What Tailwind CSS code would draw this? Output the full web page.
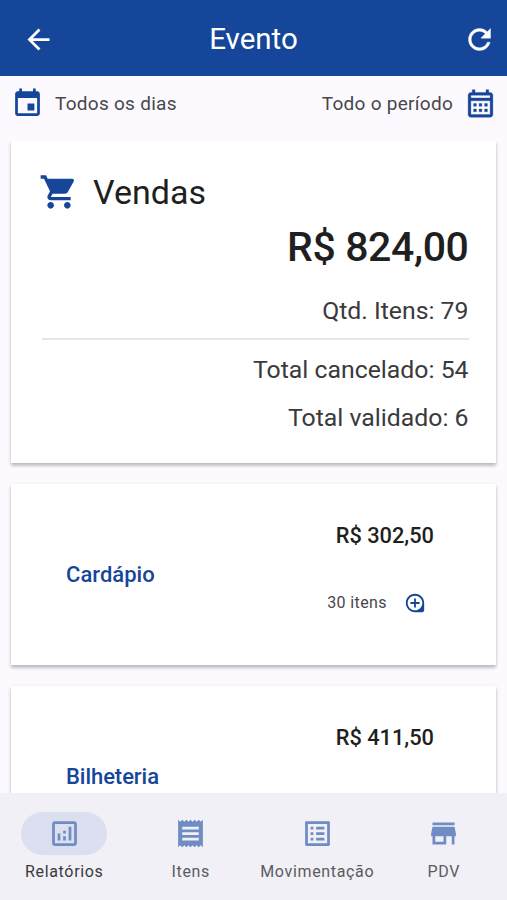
<!DOCTYPE html>
<html lang="pt-BR">
<head>
<meta charset="utf-8">
<title>Evento</title>
<script src="https://cdn.jsdelivr.net/npm/@tailwindcss/browser@4"></script>
</head>
<body class="font-[Roboto,sans-serif]">
<div class="flex h-[900px] w-[507px] flex-col overflow-hidden bg-[#fcfafe] text-[#1f1f21]">
  <header class="flex h-[76px] shrink-0 items-center justify-between bg-[#164699] pr-[11px] pl-[22px] pt-0.5 text-white">
    <svg class="size-[33px]" viewBox="0 0 24 24" fill="currentColor"><path d="M20 11H7.83l5.59-5.59L12 4l-8 8 8 8 1.41-1.41L7.83 13H20v-2z"/></svg>
    <h1 class="mr-[11px] text-[29.5px] leading-9">Evento</h1>
    <svg class="size-[33px]" viewBox="0 0 24 24" fill="currentColor" stroke="currentColor" stroke-width="0.3"><path d="M17.65 6.35C16.2 4.9 14.21 4 12 4c-4.42 0-7.99 3.58-7.99 8s3.57 8 7.99 8c3.73 0 6.84-2.55 7.73-6h-2.08c-.82 2.33-3.04 4-5.65 4-3.31 0-6-2.69-6-6s2.69-6 6-6c1.66 0 3.14.69 4.22 1.78L13 11h7V4l-2.35 2.35z"/></svg>
  </header>

  <div class="flex h-[65px] shrink-0 justify-between pr-[10px] pl-[11px] pt-[11px] text-[19px] leading-[34px] tracking-[0.28px] text-[#48474b]">
    <div class="flex h-[34px] gap-[11px]">
      <svg class="size-[33px] text-[#164699]" viewBox="0 0 24 24" fill="currentColor"><path d="M17 12h-5v5h5v-5zM16 1v2H8V1H6v2H5c-1.11 0-1.99.9-1.99 2L3 19c0 1.1.89 2 2 2h14c1.1 0 2-.9 2-2V5c0-1.1-.9-2-2-2h-1V1h-2zm3 18H5V8h14v11z"/></svg>
      <span>Todos os dias</span>
    </div>
    <div class="flex h-[34px] gap-[11px]">
      <span>Todo o período</span>
      <svg class="size-[33px] text-[#164699]" viewBox="0 0 24 24" fill="currentColor" stroke="currentColor" stroke-width="0.25"><path d="M19 4h-1V2h-2v2H8V2H6v2H5c-1.11 0-1.99.9-1.99 2L3 20c0 1.1.89 2 2 2h14c1.1 0 2-.9 2-2V6c0-1.1-.9-2-2-2zm0 16H5V10h14v10zm0-12H5V6h14v2zM9 14H7v-2h2v2zm4 0h-2v-2h2v2zm4 0h-2v-2h2v2zm-8 4H7v-2h2v2zm4 0h-2v-2h2v2zm4 0h-2v-2h2v2z"/></svg>
    </div>
  </div>

  <main class="flex min-h-0 flex-1 flex-col gap-[21px] overflow-hidden pr-[11px] pl-[11px]">
    <section class="flex h-[322px] shrink-0 flex-col bg-white pr-[27.5px] pl-[30.5px] text-right text-[24.8px] text-[#3a3a3c] shadow-[0_3px_3px_rgba(0,0,0,0.2),0_1px_4px_rgba(0,0,0,0.1)]">
      <div class="mt-[31px] -ml-[2.5px] flex h-10 items-center gap-[14px] text-[#1f1f21]">
        <svg class="size-10 text-[#164699]" viewBox="0 0 24 24" fill="currentColor"><path d="M7 18c-1.1 0-1.99.9-1.99 2S5.9 22 7 22s2-.9 2-2-.9-2-2-2zM1 2v2h2l3.6 7.59-1.35 2.45c-.16.28-.25.61-.25.96 0 1.1.9 2 2 2h12v-2H7.42c-.14 0-.25-.11-.25-.25l.03-.12.9-1.63h7.45c.75 0 1.41-.41 1.75-1.03l3.58-6.49c.08-.14.12-.31.12-.48 0-.55-.45-1-1-1H5.21l-.94-2H1zm16 16c-1.1 0-1.99.9-1.99 2s.89 2 1.99 2 2-.9 2-2-.9-2-2-2z"/></svg>
        <h2 class="text-[34px] leading-10">Vendas</h2>
      </div>
      <div class="mt-2.5 h-[50px] text-[41px] leading-[50px] font-medium tracking-[-0.4px] text-[#1f1f21]">R$ 824,00</div>
      <div class="mt-[23px] h-8 leading-8">Qtd. Itens: 79</div>
      <hr class="mt-[11px] border-t-2 border-[#e6e6e8]">
      <div class="mt-[14px] h-8 leading-8">Total cancelado: 54</div>
      <div class="mt-4 h-8 leading-8">Total validado: 6</div>
    </section>

    <section class="flex h-[181px] shrink-0 items-center justify-between bg-white pl-[55px] pr-[62px] shadow-[0_3px_3px_rgba(0,0,0,0.2),0_1px_4px_rgba(0,0,0,0.1)]">
      <h3 class="text-[22px] leading-7 font-medium tracking-[0.03px] text-[#164699]">Cardápio</h3>
      <div class="flex flex-col items-end gap-[39px] pb-[10px]">
        <div class="text-[21.8px] leading-7 font-medium">R$ 302,50</div>
        <div class="mr-[8px] flex items-center gap-[17px] text-[16px] leading-7 tracking-[0.4px] text-[#48474b]">30 itens
          <svg class="size-[22px] text-[#164699]" viewBox="0 0 24 24" fill="currentColor"><path d="M13 7h-2v4H7v2h4v4h2v-4h4v-2h-4V7zm-1-5C6.49 2 2 6.49 2 12s4.49 10 10 10h8c1.1 0 2-.9 2-2v-8c0-5.51-4.49-10-10-10zm0 18c-4.41 0-8-3.59-8-8s3.59-8 8-8 8 3.59 8 8-3.59 8-8 8z"/></svg>
        </div>
      </div>
    </section>

    <section class="flex h-[181px] shrink-0 items-center justify-between bg-white pl-[55px] pr-[62px] shadow-[0_3px_3px_rgba(0,0,0,0.2),0_1px_4px_rgba(0,0,0,0.1)]">
      <h3 class="text-[22px] leading-7 font-medium tracking-[-0.05px] text-[#164699]">Bilheteria</h3>
      <div class="flex h-[105px] flex-col items-end">
        <div class="text-[21.8px] leading-7 font-medium">R$ 411,50</div>
      </div>
    </section>
  </main>

  <nav class="grid h-[107px] shrink-0 grid-cols-4 bg-[#f0f0f6] pt-[19px] pl-px text-center text-[16px] tracking-[0.66px] text-[#5c5b60]">
    <div class="flex flex-col items-center gap-[7px]">
      <div class="flex h-[43px] w-[86px] items-center justify-center rounded-full bg-[#dcdfef]"><svg class="size-[33px] text-[#6f8cc4]" viewBox="0 0 24 24" fill="currentColor"><path d="M19 3H5c-1.1 0-2 .9-2 2v14c0 1.1.9 2 2 2h14c1.1 0 2-.9 2-2V5c0-1.1-.9-2-2-2zm0 16H5V5h14v14zM7 12h2v5H7zM15 7h2v10h-2zM11 14h2v3h-2zM11 10h2v2h-2z"/></svg></div>
      <span class="leading-5 text-[#3a3a3e]">Relatórios</span>
    </div>
    <div class="flex flex-col items-center gap-[7px]">
      <div class="flex h-[43px] items-center"><svg class="size-[33px] text-[#6f8cc4]" viewBox="0 0 24 24" fill="currentColor"><path d="M18 17H6v-2h12v2zm0-4H6v-2h12v2zm0-4H6V7h12v2zM3 22l1.5-1.5L6 22l1.5-1.5L9 22l1.5-1.5L12 22l1.5-1.5L15 22l1.5-1.5L18 22l1.5-1.5L21 22V2l-1.5 1.5L18 2l-1.5 1.5L15 2l-1.5 1.5L12 2l-1.5 1.5L9 2 7.5 3.5 6 2 4.5 3.5 3 2v20z"/></svg></div>
      <span class="leading-5">Itens</span>
    </div>
    <div class="flex flex-col items-center gap-[7px]">
      <div class="flex h-[43px] items-center"><svg class="size-[33px] text-[#6f8cc4]" viewBox="0 0 24 24" fill="currentColor"><path d="M19 5v14H5V5h14m1.1-2H3.9c-.5 0-.9.4-.9.9v16.2c0 .4.4.9.9.9h16.2c.4 0 .9-.5.9-.9V3.9c0-.5-.5-.9-.9-.9zM11 7h6v2h-6V7zm0 4h6v2h-6v-2zm0 4h6v2h-6zM7 7h2v2H7zm0 4h2v2H7zm0 4h2v2H7z"/></svg></div>
      <span class="leading-5">Movimentação</span>
    </div>
    <div class="flex flex-col items-center gap-[7px]">
      <div class="flex h-[43px] items-center"><svg class="size-[33px] text-[#6f8cc4]" viewBox="0 0 24 24" fill="currentColor"><path d="M20 4H4v2h16V4zm1 10v-2l-1-5H4l-1 5v2h1v6h10v-6h4v6h2v-6h1zm-9 4H6v-4h6v4z"/></svg></div>
      <span class="leading-5">PDV</span>
    </div>
  </nav>
</div>
</body>
</html>
